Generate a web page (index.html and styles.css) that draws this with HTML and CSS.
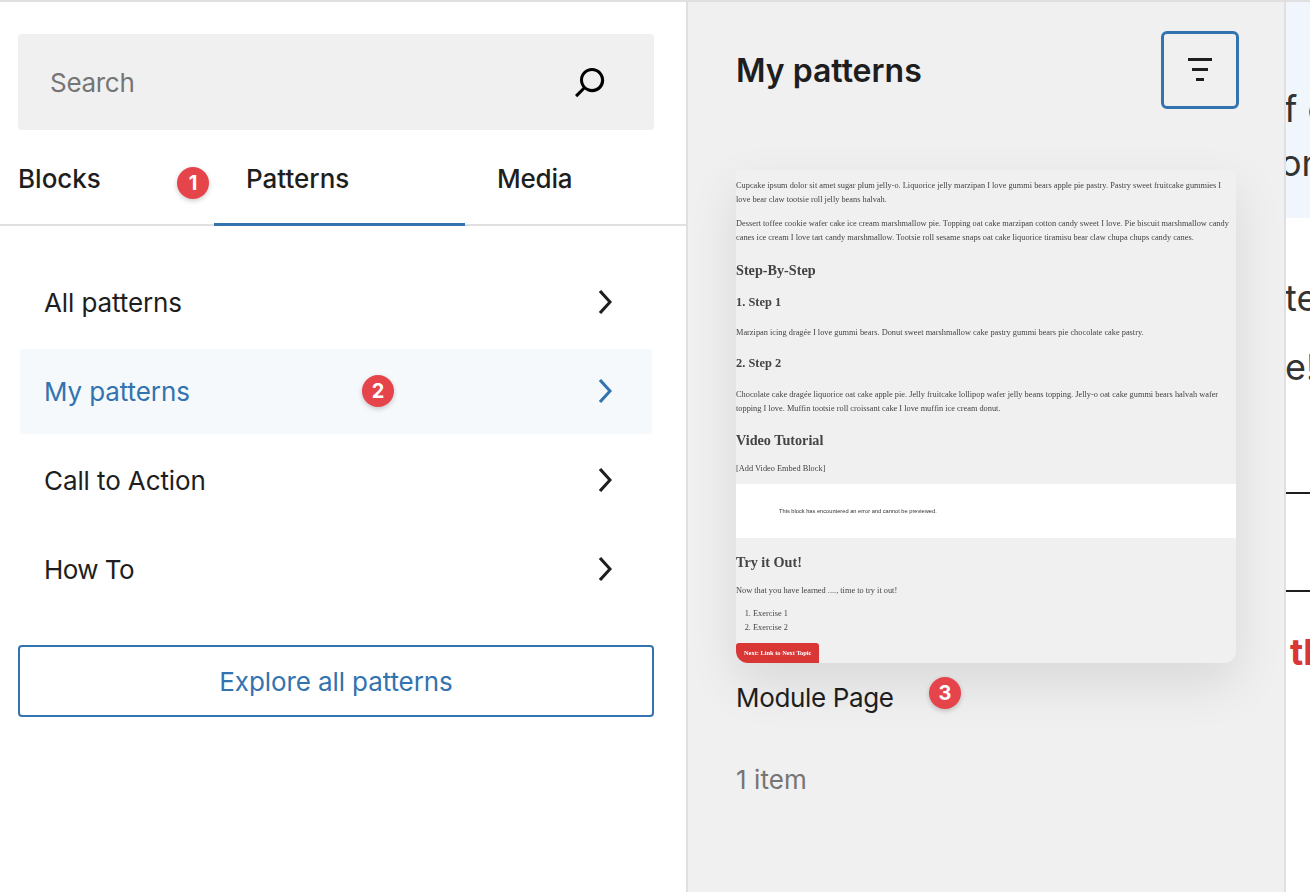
FILE: index.html
```html
<!DOCTYPE html>
<html lang="en">
<head>
    <meta charset="UTF-8">
    <meta name="viewport" content="width=device-width, initial-scale=1.0">
    <title>Patterns</title>
    <link rel="stylesheet" href="styles.css">
</head>
<body>
    <div class="editor">
        <aside class="inserter">
            <div class="search">
                <span class="search-label">Search</span>
                <svg class="icon" viewBox="0 0 24 24"><path d="M13 5c-3.3 0-6 2.7-6 6 0 1.4.5 2.7 1.3 3.7l-3.8 3.8 1.1 1.1 3.8-3.8c1 .8 2.3 1.3 3.7 1.3 3.3 0 6-2.7 6-6S16.3 5 13 5zm0 10.5c-2.5 0-4.5-2-4.5-4.5s2-4.5 4.5-4.5 4.5 2 4.5 4.5-2 4.5-4.5 4.5z"/></svg>
            </div>
            <div class="tabs">
                <div class="tab tab-blocks">Blocks</div>
                <div class="tab tab-patterns">Patterns</div>
                <div class="tab tab-media">Media</div>
                <span class="badge badge-tabs">1</span>
            </div>
            <ul class="categories">
                <li class="category">All patterns
                    <svg class="icon" viewBox="0 0 24 24"><path d="M10.6 6L9.4 7l4.6 5-4.6 5 1.2 1 5.4-6z"/></svg>
                </li>
                <li class="category active">My patterns
                    <span class="badge badge-row">2</span>
                    <svg class="icon" viewBox="0 0 24 24"><path d="M10.6 6L9.4 7l4.6 5-4.6 5 1.2 1 5.4-6z"/></svg>
                </li>
                <li class="category">Call to Action
                    <svg class="icon" viewBox="0 0 24 24"><path d="M10.6 6L9.4 7l4.6 5-4.6 5 1.2 1 5.4-6z"/></svg>
                </li>
                <li class="category category-how">How To
                    <svg class="icon" viewBox="0 0 24 24"><path d="M10.6 6L9.4 7l4.6 5-4.6 5 1.2 1 5.4-6z"/></svg>
                </li>
            </ul>
            <button class="explore">Explore all patterns</button>
        </aside>

        <section class="patterns">
            <div class="patterns-head">
                <h2>My patterns</h2>
                <button class="filter">
                    <span class="filter-line line-lg"></span>
                    <span class="filter-line line-md"></span>
                    <span class="filter-line line-sm"></span>
                </button>
            </div>
            <div class="preview">
                <p>Cupcake ipsum dolor sit amet sugar plum jelly-o. Liquorice jelly marzipan I love gummi bears apple pie pastry. Pastry sweet fruitcake gummies I love bear claw tootsie roll jelly beans halvah.</p>
                <p class="second">Dessert toffee cookie wafer cake ice cream marshmallow pie. Topping oat cake marzipan cotton candy sweet I love. Pie biscuit marshmallow candy canes ice cream I love tart candy marshmallow. Tootsie roll sesame snaps oat cake liquorice tiramisu bear claw chupa chups candy canes.</p>
                <h3 class="step-title">Step-By-Step</h3>
                <h4 class="step-one">1. Step 1</h4>
                <p class="step-text">Marzipan icing dragée I love gummi bears. Donut sweet marshmallow cake pastry gummi bears pie chocolate cake pastry.</p>
                <h4 class="step-two">2. Step 2</h4>
                <p class="step-text-two">Chocolate cake dragée liquorice oat cake apple pie. Jelly fruitcake lollipop wafer jelly beans topping. Jelly-o oat cake gummi bears halvah wafer topping I love. Muffin tootsie roll croissant cake I love muffin ice cream donut.</p>
                <h3 class="video-title">Video Tutorial</h3>
                <p class="video-text">[Add Video Embed Block]</p>
                <div class="block-error">This block has encountered an error and cannot be previewed.</div>
                <h3 class="try-title">Try it Out!</h3>
                <p class="try-text">Now that you have learned ...., time to try it out!</p>
                <ol>
                    <li>Exercise 1</li>
                    <li>Exercise 2</li>
                </ol>
                <span class="next">Next: Link to Next Topic</span>
            </div>
            <div class="pattern-name">Module Page
                <span class="badge badge-card">3</span>
            </div>
            <div class="item-count">1 item</div>
        </section>

        <main class="canvas">
            <div class="notice">
                <div class="canvas-line notice-one">f c</div>
                <div class="canvas-line notice-two">on</div>
            </div>
            <div class="canvas-line body-one">te</div>
            <div class="canvas-line body-two">e!</div>
            <hr>
            <hr class="rule-two">
            <div class="canvas-line red-line">th</div>
        </main>
    </div>
</body>
</html>
```

FILE: styles.css
```css
* {
    box-sizing: border-box;
}
body {
    margin: 0;
    background: #fff;
    color: #1e1e1e;
    font-family: Inter, "Noto Sans", sans-serif;
}
.editor {
    display: flex;
    height: 892px;
    overflow: hidden;
    border-top: 2px solid #e0e0e0;
}
.icon {
    width: 48px;
    height: 48px;
    flex: none;
    fill: currentColor;
}

/* left panel */
.inserter {
    width: 688px;
    flex: none;
    border-right: 2px solid #e0e0e0;
    padding-top: 32px;
}
.search {
    display: flex;
    align-items: center;
    justify-content: space-between;
    height: 96px;
    margin: 0 32px 0 18px;
    padding: 0 40px 0 32px;
    background: #f0f0f0;
    border-radius: 4px;
}
.search .icon {
    color: #000;
}
.search-label {
    font-size: 26px;
    color: #757575;
    letter-spacing: -0.3px;
}
.tabs {
    position: relative;
    display: flex;
    height: 96px;
    border-bottom: 2px solid #e0e0e0;
    font-size: 26px;
    font-weight: 500;
}
.tab {
    padding-top: 34px;
    line-height: 30px;
}
.tab-blocks {
    width: 214px;
    padding-left: 18px;
}
.tab-patterns {
    width: 251px;
    height: 96px;
    padding-left: 32px;
    border-bottom: 3px solid #3373b0;
}
.tab-media {
    padding-left: 32px;
    letter-spacing: -0.2px;
}
.categories {
    list-style: none;
    margin: 32px 0 0;
    padding: 0;
}
.category {
    position: relative;
    display: flex;
    align-items: center;
    justify-content: space-between;
    height: 89px;
    margin: 0 34px 0 20px;
    padding: 0 24px;
    font-size: 26px;
    letter-spacing: -0.1px;
}
.category .icon {
    margin-top: -2px;
}
.category.active {
    height: 85px;
    margin-top: 2px;
    margin-bottom: 2px;
    background: #f5f9fc;
    border-radius: 4px;
    color: #3373b0;
}
.category-how {
    letter-spacing: -0.55px;
}
.explore {
    display: block;
    width: 636px;
    height: 72px;
    margin: 31px 0 0 18px;
    background: #fff;
    border: 2px solid #3373b0;
    border-radius: 4px;
    color: #3373b0;
    font: 26px Inter, "Noto Sans", sans-serif;
    letter-spacing: -0.1px;
}

/* numbered callouts */
.badge {
    position: absolute;
    width: 32px;
    height: 32px;
    border-radius: 50%;
    background: #e5444b;
    box-shadow: 0 2px 5px rgba(0,0,0,0.2);
    color: #fff;
    font-size: 20px;
    font-weight: 700;
    letter-spacing: 0;
    line-height: 32px;
    text-align: center;
}
.badge-tabs {
    left: 177px;
    top: 37px;
}
.badge-row {
    left: 342px;
    top: 26px;
}
.badge-card {
    left: 193px;
    top: -5px;
}

/* middle panel */
.patterns {
    width: 598px;
    flex: none;
    background: #f0f0f0;
    border-right: 2px solid #e0e0e0;
    padding: 29px 45px 0 48px;
}
.patterns-head {
    display: flex;
    align-items: center;
    justify-content: space-between;
    height: 78px;
}
.patterns-head h2 {
    margin: 0;
    font-size: 32px;
    font-weight: 600;
}
.filter {
    display: flex;
    flex-direction: column;
    align-items: center;
    justify-content: center;
    gap: 7px;
    width: 78px;
    height: 78px;
    padding: 0 0 1px;
    background: transparent;
    border: 3px solid #3373b0;
    border-radius: 6px;
}
.filter-line {
    height: 3px;
    background: #1e1e1e;
}
.line-lg { width: 24px; }
.line-md { width: 16px; }
.line-sm { width: 8px; }

/* scaled-down pattern preview, so slightly soft */
.preview {
    width: 500px;
    height: 493px;
    margin-top: 61px;
    padding-top: 9px;
    overflow: hidden;
    background: #f0f0f0;
    border-radius: 0 0 12px 12px;
    box-shadow: 0 20px 50px rgba(0,0,0,0.1);
    color: #444;
    font-family: "Liberation Serif", serif;
    font-size: 8.33px;
    line-height: 14.3px;
    filter: blur(0.25px);
}
.preview p,
.preview h3,
.preview h4,
.preview ol {
    margin: 0;
}
.preview h3 {
    font-size: 14.2px;
    line-height: 16px;
}
.preview h4 {
    font-size: 12.4px;
    line-height: 14px;
}
.preview .second { margin-top: 9.5px; }
.preview .step-title { margin-top: 16.5px; }
.preview .step-one { margin-top: 16.5px; }
.preview .step-text { margin-top: 17px; }
.preview .step-two { margin-top: 16px; }
.preview .step-text-two { margin-top: 18px; }
.preview .video-title { margin-top: 15.5px; }
.preview .video-text { margin-top: 13.5px; }
.block-error {
    height: 54px;
    margin-top: 8px;
    padding: 20px 0 0 43px;
    background: #fff;
    color: #333;
    font-family: "Liberation Sans", sans-serif;
    font-size: 5.7px;
    line-height: 14px;
}
.preview .try-title { margin-top: 16px; }
.preview .try-text { margin-top: 14px; }
.preview ol {
    margin-top: 9px;
    padding-left: 17px;
}
.next {
    display: inline-block;
    height: 20px;
    margin-top: 7px;
    padding: 0 8px;
    background: #d93636;
    border-radius: 3px 3px 0 6px;
    color: #fff;
    font-size: 6.4px;
    font-weight: 700;
    line-height: 19px;
}
.pattern-name {
    position: relative;
    margin-top: 19px;
    font-size: 26px;
    letter-spacing: -0.35px;
    line-height: 32px;
}
.item-count {
    margin-top: 50px;
    color: #757575;
    font-size: 26px;
    letter-spacing: 0.1px;
    line-height: 32px;
}

/* post canvas cut off by the window edge */
.canvas {
    flex: 1;
    min-width: 0;
    overflow: hidden;
}
.notice {
    height: 216px;
    background: #f0f6fc;
    padding-top: 80px;
}
.canvas-line {
    color: #333;
    font-size: 36px;
    line-height: 54px;
    white-space: nowrap;
}
.notice-one {
    margin-left: -2px;
}
.notice-two {
    margin-left: -6px;
}
.body-one {
    margin: 53px 0 0 -1px;
}
.body-two {
    margin: 15px 0 0 -1px;
}
.canvas hr {
    height: 2px;
    margin: 98px 0 0;
    border: 0;
    background: #1e1e1e;
}
.canvas hr.rule-two {
    margin-top: 96px;
}
.red-line {
    margin: 33px 0 0 4px;
    color: #d93636;
    font-weight: 700;
}
```
